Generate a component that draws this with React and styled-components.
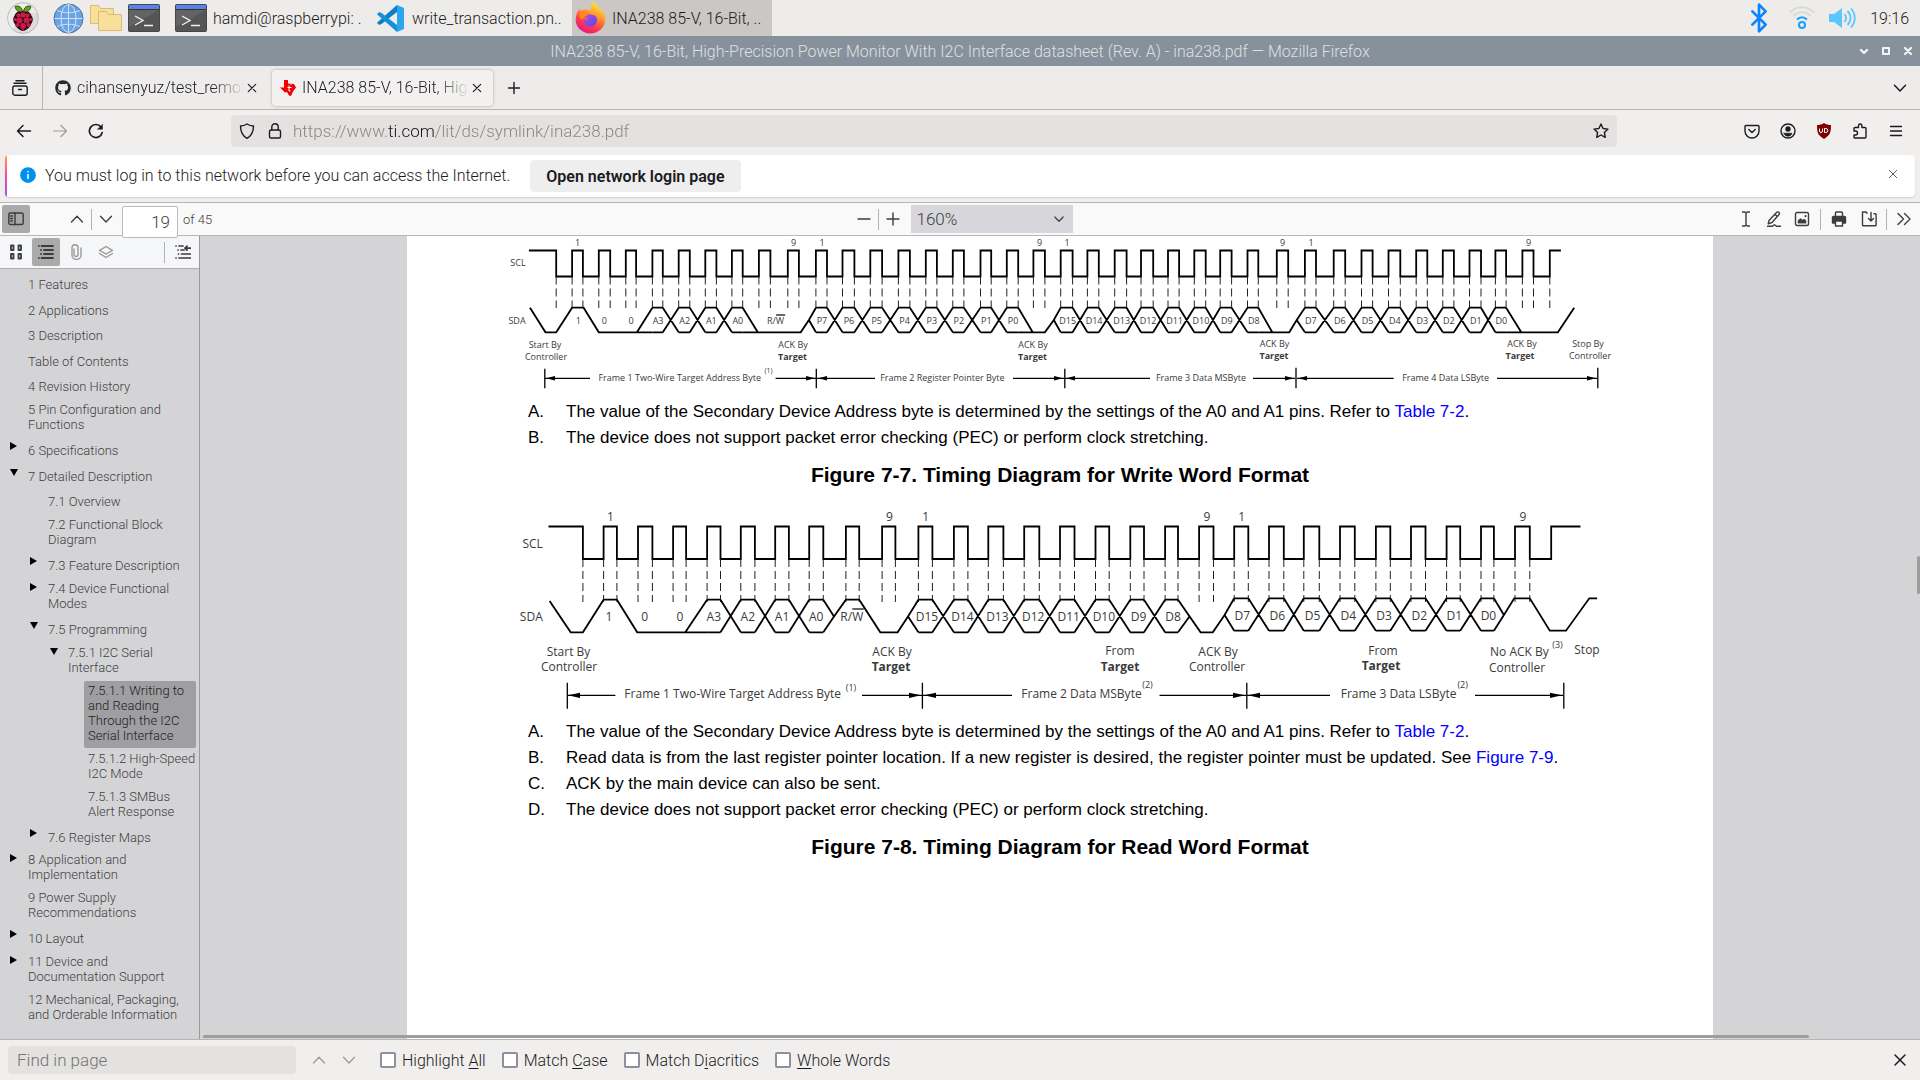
import React from "react";
import styled, { createGlobalStyle, css } from "styled-components";
import { Bluetooth } from "lucide-react";
import { FaGithub } from "react-icons/fa";

const ui = `Roboto, "Noto Sans", sans-serif`;
const doc = `"Liberation Sans", Arial, sans-serif`;

const GlobalStyle = createGlobalStyle`
  *, *::before, *::after { box-sizing: border-box; }
  body { margin: 0; font-family: ${ui}; font-weight: 300; font-size: 16px; color: #1c1b22; background: #edecea; overflow: hidden; }
  button, input, select { font: inherit; color: inherit; margin: 0; padding: 0; border: 0; background: none; border-radius: 0; outline: 0; }
  input, select { font-size: 17px; }
  svg { display: block; flex: none; }
`;

const Screen = styled.div`
  display: flex;
  flex-direction: column;
  height: 100vh;
`;

/* ---------- desktop panel ---------- */
const Panel = styled.header`
  display: flex;
  align-items: center;
  flex: none;
  height: 36px;
  background: #edecea;
`;
const Launchers = styled.nav`
  display: flex;
  align-items: center;
  width: 172px;
  padding-left: 7px;
`;
const Launcher = styled.button`
  display: flex;
  margin-right: ${(p) => p.$gap || 6}px;
`;
const Task = styled.button`
  display: flex;
  align-items: center;
  gap: 6px;
  width: 200px;
  height: 36px;
  padding-left: 3px;
  text-align: left;
  white-space: nowrap;
  background: ${(p) => (p.$active ? "#cbc7c4" : "transparent")};
`;
const Tray = styled.div`
  display: flex;
  align-items: center;
  gap: 14px;
  margin-left: auto;
  padding-right: 11px;
`;
const TitleBar = styled.div`
  display: flex;
  align-items: center;
  flex: none;
  height: 30px;
  padding: 0 6px;
  background: #87919b;
  color: #dde1e4;
`;
const WindowTitle = styled.h1`
  flex: 1;
  margin: 0;
  padding-left: 56px;
  font-size: 16px;
  font-weight: 300;
  text-align: center;
`;
const WindowButtons = styled.div`
  display: flex;
  gap: 10px;
  color: #f4f4f4;
`;

/* ---------- browser chrome ---------- */
const IconButton = styled.button`
  display: flex;
  align-items: center;
  justify-content: center;
  flex: none;
  width: ${(p) => p.$w || 28}px;
  height: 28px;
  border-radius: 2px;
  color: ${(p) => (p.$dim ? "#9b9b99" : "inherit")};
  background: ${(p) => (p.$on ? "#aaaaaa" : "transparent")};
`;
const TabStrip = styled.div`
  display: flex;
  align-items: center;
  flex: none;
  height: 44px;
  border-bottom: 1px solid #b6b7b2;
`;
const FirefoxView = styled.div`
  display: flex;
  align-items: center;
  justify-content: center;
  width: 43px;
  height: 43px;
  padding-right: 2px;
  border-right: 1px solid #b6b7b2;
`;
const Tab = styled.div`
  display: flex;
  align-items: center;
  width: 221px;
  height: 36px;
  margin-left: 4px;
  padding: 0 8px;
  border-radius: 4px;
  ${(p) => p.$active && css`
    background: #f2f1ef;
    box-shadow: 0 0 3px #77777799;
  `}
`;
const TabTitle = styled.span`
  flex: 1;
  margin-left: 6px;
  overflow: hidden;
  white-space: nowrap;
  mask-image: linear-gradient(to left, transparent, #000 32px);
`;
const TabClose = styled.button`
  display: flex;
  justify-content: center;
  width: 16px;
`;
const NavBar = styled.div`
  display: flex;
  align-items: center;
  flex: none;
  height: 42px;
  padding: 0 10px;
  background: #f0efed;
`;
const NavButtons = styled.div`
  display: flex;
  gap: 8px;
  width: 221px;
`;
const Tools = styled.div`
  display: flex;
  gap: 8px;
`;
const UrlBar = styled.label`
  display: flex;
  align-items: center;
  gap: 12px;
  flex: 1;
  height: 32px;
  margin-right: 121px;
  padding: 0 8px;
  border-radius: 4px;
  background: #e3e2e0;
`;
const UrlInput = styled.input`
  flex: 1;
  margin-left: -2px;
  color: transparent;
  background: linear-gradient(90deg, #85857f 94px, #15141a 94px, #15141a 141px, #85857f 141px);
  background-clip: text;
  -webkit-background-clip: text;
`;
const Notification = styled.section`
  display: flex;
  align-items: center;
  flex: none;
  height: 51px;
  padding: 3px 5px 5px;
  background: #f0efed;
  border-bottom: 1px solid #b6b7b2;
`;
const NotificationCard = styled.div`
  display: flex;
  align-items: center;
  flex: 1;
  height: 42px;
  padding: 0 14px;
  border-radius: 4px;
  background: linear-gradient(#ffa436, #ff4aa2 45%, #9059ff) left / 2px 100% no-repeat #fff;
  box-shadow: 0 1px 2px #00000022;
`;
const Message = styled.p`
  display: flex;
  align-items: center;
  gap: 8px;
  margin: 0 20px 2px 0;
`;
const LoginButton = styled.button`
  height: 32px;
  padding: 0 16px;
  border-radius: 4px;
  background: #eeeeee;
  font-weight: 600;
`;
const Push = styled.div`
  margin-left: auto;
`;
const Dismiss = styled(TabClose)`
  margin-bottom: 4px;
  color: #5b5b66;
`;

/* ---------- pdf viewer ---------- */
const ViewerBar = styled.div`
  display: grid;
  grid-template-columns: 1fr auto 1fr;
  flex: none;
  height: 33px;
  border-bottom: 1px solid #b8b8b8;
  background: #f9f9fa;
  color: #3c3c3e;
`;
const BarGroup = styled.div`
  display: flex;
  align-items: center;
  justify-content: ${(p) => p.$align || "flex-start"};
  height: 32px;
  padding-left: 2px;
`;
const Separator = styled.span`
  display: block;
  width: 1px;
  height: 21px;
  margin: 0 ${(p) => p.$m || 0}px;
  background: #b2b2b4;
`;
const PageInput = styled.input`
  position: relative;
  width: 56px;
  height: 32px;
  margin: 6px 5px 0 2px;
  padding: 0 7px;
  border: 1px solid #bbbbbc;
  border-radius: 2px;
  background: #fff;
  text-align: right;
`;
const Small = styled.span`
  font-size: 13px;
`;
const ZoomSelect = styled.span`
  display: flex;
  align-items: center;
  width: 162px;
  height: 28px;
  margin-left: 4px;
  padding-right: 8px;
  background: #d7d7db;
  select { flex: 1; height: 28px; padding-left: 6px; appearance: none; }
`;
const Gap = styled.span`
  width: 33px;
`;
const Viewer = styled.div`
  display: flex;
  flex: 1;
  min-height: 0;
  border-bottom: 1px solid #b6b7b2;
`;
const Sidebar = styled.aside`
  width: 200px;
  flex: none;
  border-right: 1px solid #9a9a9c;
  background: #d4d4d7;
`;
const SidebarBar = styled.div`
  display: flex;
  align-items: center;
  gap: 2px;
  height: 33px;
  padding-left: 2px;
  border-bottom: 1px solid #b0b0b2;
  background: #f5f6f8;
  color: #3c3c3e;
`;
const Outline = styled.div`
  padding: 3px 3px 0 0;
`;
const EntryLink = styled.a`
  display: flex;
  align-items: center;
  flex: 1;
  min-height: 24px;
  padding: 2px 0 ${(p) => (p.$wrap ? 5 : 2)}px 4px;
  border-radius: 2px;
  font-size: 13px;
  line-height: 15px;
  text-decoration: none;
  white-space: pre;
  color: ${(p) => (p.$current ? "#1c1c1e" : "#3e3e40")};
  background: ${(p) => (p.$current ? "#9f9fa1" : "transparent")};
`;
const Entry = styled.div`
  display: flex;
  align-items: flex-start;
  margin-bottom: 1px;
  padding-left: ${(p) => p.$level * 20}px;
  &:nth-child(odd) ${EntryLink} { min-height: 25px; }
`;
const Toggle = styled.button`
  display: flex;
  justify-content: center;
  width: 24px;
  padding: 4px 0 0 3px;
`;
const Canvas = styled.main`
  position: relative;
  flex: 1;
  display: flex;
  justify-content: center;
  background: #d4d4d7;
  overflow: hidden;
`;
const ScrollX = styled.div`
  position: absolute;
  left: 3px;
  right: 111px;
  bottom: 1px;
  height: 3px;
  border-radius: 2px;
  background: #9c9e9d;
`;
const ScrollY = styled.div`
  position: absolute;
  right: 0;
  top: 320px;
  width: 3px;
  height: 38px;
  border-radius: 2px;
  background: #9c9e9d;
`;
const Sheet = styled.article`
  width: 1306px;
  flex: none;
  padding: 0 93px;
  background: #fff;
  color: #000;
  font-family: ${doc};
  font-weight: 400;
  font-size: 17px;
  line-height: 26px;
`;
const Notes = styled.ol`
  margin: 0;
  padding: 0 0 0 28px;
  list-style: none;
`;
const Note = styled.li`
  display: flex;
  white-space: nowrap;
  a { color: #0000ff; text-decoration: none; }
`;
const Letter = styled.span`
  width: 38px;
`;
const Figure = styled.figure`
  margin: 0;
`;
const Caption = styled.figcaption`
  margin: 11px 0 24px;
  font-size: 21px;
  font-weight: 700;
  line-height: 26px;
  text-align: center;
`;
const Drawing = styled.svg`
  overflow: visible;
  font-family: "Open Sans", "Noto Sans", sans-serif;
  font-size: ${(p) => p.$size}px;
  fill: none;
  stroke: #000;
  text { fill: #3a3a3a; stroke: none; text-anchor: middle; }
`;

/* ---------- find bar ---------- */
const FindBar = styled.form`
  display: flex;
  align-items: center;
  flex: none;
  height: 40px;
  padding: 0 6px 0 8px;
  background: #f0efed;
`;
const FindInput = styled.input`
  width: 288px;
  height: 28px;
  margin-right: 8px;
  padding: 0 9px;
  border-radius: 4px;
  background: #e3e2e0;
  &::placeholder { color: #73736f; opacity: 1; }
`;
const Check = styled.label`
  display: flex;
  align-items: center;
  gap: 6px;
  margin-left: 16px;
  u { text-underline-offset: 2px; }
`;
const CheckBox = styled.input`
  appearance: none;
  width: 16px;
  height: 16px;
  border: 2px solid #8f8f9d;
  border-radius: 2px;
  background: #fff;
`;

/* ---------- icons ---------- */
const Ico = ({ s = 16, w = 1.4, children, box = 16 }) => (
  <svg width={s} height={s} viewBox={`0 0 ${box} ${box}`} fill="none" stroke="currentColor" strokeWidth={w} strokeLinecap="round" strokeLinejoin="round" aria-hidden="true">
    {children}
  </svg>
);
const Chevron = ({ up, s = 16, w = 1.3 }) => (
  <Ico s={s} w={w}><path d={up ? "M2.5 11 8 5.3 13.5 11" : "M2.5 5.3 8 11 13.5 5.3"} /></Ico>
);
const Cross = ({ s = 16, w = 1.2 }) => (
  <Ico s={s} w={w}><path d="M4.300 4.300l7.400 7.400M11.700 4.300l-7.400 7.400" /></Ico>
);

const Raspberry = () => (
  <svg width="32" height="32" viewBox="0 0 32 32" aria-hidden="true">
    <circle cx="16" cy="16" r="15.4" fill="#dcdcdc" stroke="#b9b9b9" />
    <path d="M1.5 13A15 15 0 0 1 30 11C20 9 10 18 6 27A15 15 0 0 1 1.5 13z" fill="#ececec" />
    <path d="M16 9c4-1 8 2 8.500 5 2 2 1.500 6-.5 8-1 4-5 6.500-8 7-3-.5-7-3-8-7-2-2-2.500-6-.5-8C8 11 12 8 16 9z" fill="#2a0610" />
    <g fill="#c51a4a">
      <circle cx="16" cy="13" r="2.700" /><circle cx="11.500" cy="13.500" r="2.200" /><circle cx="20.500" cy="13.500" r="2.200" />
      <circle cx="12.500" cy="18.600" r="3" /><circle cx="19.500" cy="18.600" r="3" /><circle cx="16" cy="24" r="2.900" />
      <circle cx="8.300" cy="17.500" r="1.800" /><circle cx="23.700" cy="17.500" r="1.800" />
      <circle cx="10.500" cy="23" r="2" /><circle cx="21.500" cy="23" r="2" /><circle cx="16" cy="27.600" r="1.100" />
    </g>
    <path d="M15.500 9.800C11 10.500 8.500 8 8.200 4.300c3.500-.8 6.800.5 7.300 5.500zM16.500 9.800c4.500.7 7-1.800 7.300-5.500-3.500-.8-6.800.5-7.300 5.500z" fill="#5fa321" stroke="#1d3a08" strokeWidth=".8" />
  </svg>
);
const Globe = () => (
  <svg width="31" height="31" viewBox="0 0 31 31" fill="none" aria-hidden="true">
    <circle cx="15.500" cy="15.500" r="14.500" fill="#6ba4e4" stroke="#4a6f9c" />
    <g stroke="#cfe2f7" strokeWidth="1">
      <ellipse cx="15.500" cy="15.500" rx="7.500" ry="14" /><path d="M15.500 1.500v28M1.500 15.500h28M4 7.500c7 3 16 3 23 0M4 23.500c7-3 16-3 23 0" />
    </g>
  </svg>
);
const Folders = () => (
  <svg width="32" height="28" viewBox="0 0 32 28" fill="#f8e09a" stroke="#d9bb74" aria-hidden="true">
    <path d="M.5 1.500h8l2 3h13v15H.5z" /><path d="M8.500 7.500h8l2 3h13v16h-23z" />
  </svg>
);
const Terminal = () => (
  <svg width="32" height="28" viewBox="0 0 32 28" fill="none" aria-hidden="true">
    <rect x=".5" y=".5" width="31" height="27" rx="1" fill="#555" stroke="#474747" />
    <path d="M1 6h30L1 23z" fill="#636363" /><path d="M1 1h30v4H1z" fill="#5b82e8" /><path d="M1 5.500h30" stroke="#333" />
    <path d="M7 12l8 4.500-8 4.500M16 21.500h9" stroke="#f2f2f2" strokeWidth="1.400" />
  </svg>
);
const VsCode = () => (
  <svg width="31" height="29" viewBox="0 0 31 29" aria-hidden="true">
    <path d="M22 1l7 3v21l-7 3z" fill="#2aa5f0" />
    <path d="M22 1L4.500 16.500 2 18.800 4 21 6.500 20 22 8z" fill="#0d7fc6" />
    <path d="M22 28L4.500 12.500 2 10.200 4 8l2.500 1L22 21z" fill="#1590d8" />
  </svg>
);
const Firefox = () => (
  <svg width="31" height="32" viewBox="0 0 31 32" aria-hidden="true">
    <defs>
      <linearGradient id="fx" x1=".8" y1="0" x2=".3" y2="1"><stop offset="0" stopColor="#fff044" /><stop offset=".35" stopColor="#ffa32c" /><stop offset=".7" stopColor="#ff3c4a" /><stop offset="1" stopColor="#e31587" /></linearGradient>
      <linearGradient id="fg" x1="0" y1="0" x2="1" y2="1"><stop offset="0" stopColor="#b04df0" /><stop offset="1" stopColor="#5b46d6" /></linearGradient>
    </defs>
    <path d="M18.500 0c4 2.500 5 6 5.500 8 1-.3 1-1.500.8-2.500C29 9 30.500 14 30.300 18 29.800 26 23 31.500 15.500 31.500S1 26 .7 18.500C.5 13 2.500 9 5 6.500l.5 3C9 6 14 8 15.500 9c-.5-3.500.5-7 3-9z" fill="url(#fx)" />
    <path d="M10 14c2-2.500 5-2 7-1 3-.5 5 2 5 5 0 4-3 6.500-6.500 6.500S8.500 22 8.500 18c2 0 4 0 5-1.500-2 0-3-1-3.500-2.500z" fill="url(#fg)" />
    <path d="M5 11c3-2 7-2 9 1l-4 2.500C7.500 16 8 18 8 18c-3-1-4-4-3-7z" fill="#ff8a16" />
  </svg>
);
const Wifi = () => (
  <svg width="26" height="24" viewBox="0 0 26 24" fill="none" strokeWidth="2" aria-hidden="true">
    <path d="M1 6.500C7.500-.5 18.500-.5 25 6.500M4.500 10c4.500-5 12.500-5 17 0" stroke="#d9d9d9" />
    <path d="M8 13.500c3-3 7-3 10 0M13 22a3 3 0 1 0 0-6 3 3 0 0 0 0 6z" stroke="#1a9fff" />
  </svg>
);
const Speaker = () => (
  <svg width="27" height="22" viewBox="0 0 27 22" fill="none" stroke="#5cc6ff" strokeWidth="1.800" aria-hidden="true">
    <path d="M0 7h5l8-6v20l-8-6H0z" fill="#5cc6ff" stroke="none" /><path d="M15.500 7c2 2.500 2 5.500 0 8M18.500 4c4 4 4 10 0 14M22 1.500c5 5.500 5 13.500 0 19" />
  </svg>
);
const TexasMark = () => (
  <svg width="16" height="16" viewBox="0 0 16 16" aria-hidden="true">
    <path d="M4 0h4v3.500l6 .5 2 3.500-3 4-2 4.500-2-.5-2-3.500-2 .5L0 7.500h4z" fill="#f00000" />
    <path d="M9 5.500v5.500h1.500M7.500 7.500h4M11 4v.8" stroke="#fff" fill="none" />
  </svg>
);
const Ublock = () => (
  <svg width="16" height="16" viewBox="0 0 16 16" aria-hidden="true">
    <path d="M8 0c2 1.500 4.500 2 7 2 0 7-.5 10-7 14C1.500 12 1 9 1 2c2.500 0 5-.5 7-2z" fill="#800000" />
    <path d="M3.500 5.500V8a1.500 1.500 0 0 0 3 0V5.500M8.500 5.500v4h1.300a2 2 0 0 0 0-4z" fill="none" stroke="#fff" />
  </svg>
);

/* ---------- outline data ---------- */
const outline = [
  ["1 Features"], ["2 Applications"], ["3 Description"], ["Table of Contents"], ["4 Revision History"],
  ["5 Pin Configuration and\nFunctions"],
  ["6 Specifications", 0, "closed"],
  ["7 Detailed Description", 0, "open"],
  ["7.1 Overview", 1], ["7.2 Functional Block\nDiagram", 1],
  ["7.3 Feature Description", 1, "closed"],
  ["7.4 Device Functional\nModes", 1, "closed"],
  ["7.5 Programming", 1, "open"],
  ["7.5.1 I2C Serial\nInterface", 2, "open"],
  ["7.5.1.1 Writing to\nand Reading\nThrough the I2C\nSerial Interface", 3, null, true],
  ["7.5.1.2 High-Speed\nI2C Mode", 3], ["7.5.1.3 SMBus\nAlert Response", 3],
  ["7.6 Register Maps", 1, "closed"],
  ["8 Application and\nImplementation", 0, "closed"],
  ["9 Power Supply\nRecommendations"],
  ["10 Layout", 0, "closed"],
  ["11 Device and\nDocumentation Support", 0, "closed"],
  ["12 Mechanical, Packaging,\nand Orderable Information"],
];

/* ---------- timing diagrams ---------- */
const clockPath = (start, fall, pulses, hi, lo, rise, end) =>
  `M${start} ${hi}H${fall}V${lo}` + pulses.map(([a, b]) => `H${a}V${hi}H${b}V${lo}`).join("") + `H${rise}V${hi}H${end}`;

const busPath = (cells, hi, lo) =>
  cells.map(([a, b], i) => {
    const next = cells[i + 1];
    return `M${a} ${hi}H${b}M${a} ${lo}H${b}` + (next ? `M${b} ${hi}L${next[0]} ${lo}M${b} ${lo}L${next[0]} ${hi}` : "");
  }).join("");

const Guides = ({ xs, y1, y2 }) => (
  <path d={xs.map((x) => `M${x} ${y1}V${y2}`).join("")} strokeWidth="1" strokeDasharray="8 4" stroke="#222" />
);

const Span = ({ from, to, y, text, len, size, children }) => {
  const h = size === 9 ? 2.2 : 2.6;
  return (
    <g>
      <path d={`M${from} ${y}H${text[0]}M${text[1]} ${y}H${to}`} strokeWidth="1.300" />
      <path d={`M${from + 1} ${y}l${len} ${-h}v${2 * h}zM${to - 1} ${y}l${-len} ${-h}v${2 * h}z`} fill="#000" stroke="none" />
      {children}
    </g>
  );
};

const RW = ({ x, y, w, top }) => (
  <g><text x={x} y={y}>R/W</text><path d={`M${x + w[0]} ${top}h${w[1]}`} strokeWidth="1.200" /></g>
);

const wPulses = [
  [572.1, 582.9], [598.8, 610.2], [625.8, 636.1], [652.4, 662.8], [678.7, 689.8], [705.3, 716.4], [731.9, 742.7], [758.9, 770.4], [787.8, 798.9],
  [815.9, 827], [842.5, 854.4], [870.3, 882.1], [898.4, 909.9], [925.8, 936.9], [952.8, 963.9], [980.5, 991.2], [1006.8, 1018.2], [1033.4, 1044.9],
  [1060.7, 1072.6], [1087.4, 1098.8], [1114.7, 1126.6], [1141, 1153.2], [1168, 1179.1], [1194.3, 1205.7], [1220.2, 1231.6], [1247.5, 1258.3], [1276.8, 1288.2],
  [1304.9, 1316], [1333.7, 1345.2], [1361.5, 1372.6], [1388.5, 1400.3], [1416.2, 1427.3], [1442.8, 1453.9], [1469.5, 1481], [1495.4, 1506.1], [1522.4, 1533.5],
];
const rPulses = [
  [603.6, 616.9], [638, 652.4], [673.1, 686.1], [707.1, 720.5], [740.8, 754.9], [775.2, 788.9], [809.2, 823.3], [845.9, 859.2], [882.1, 895.4],
  [918.4, 932.4], [953.9, 967.9], [988.3, 1003.4], [1024.2, 1039.3], [1060, 1074.5], [1095.5, 1109.2], [1130.3, 1144], [1165.1, 1178], [1199.1, 1213.5],
  [1234.2, 1248.3], [1269, 1283.8], [1303.8, 1319.3], [1340, 1354.8], [1375.9, 1390.3], [1411, 1425.5], [1446.6, 1460.2], [1481, 1493.9], [1515, 1529.8],
];

const CellLabels = ({ cells, names, y, dx = 0 }) =>
  names.map((n, i) => <text key={n} x={(cells[i][0] + cells[i][1]) / 2 + dx} y={y}>{n}</text>);

function WriteDiagram() {
  const hi = 307.700, lo = 332.300, mid = 320;
  const a = wPulses.slice(3, 7), p = wPulses.slice(9, 17), d = wPulses.slice(18, 26), e = wPulses.slice(27, 35);
  return (
    <Drawing $size={9} width="1120" height="163" viewBox="500 236 1120 163" role="img" aria-label="Write word timing">
      <path d={clockPath(528.9, 556.2, wPulses, 250.5, 276.5, 1549.8, 1560.9)} strokeWidth="1.800" />
      <Guides xs={[556.2, ...wPulses.flat(), 1549.8]} y1={276.5} y2={308} />
      <g strokeWidth="1.800">
        <path d={`M530 ${hi}L545.5 ${lo}H556.2L572.1 ${hi}H583.6L598.8 ${lo}H652.4M636.9 ${lo}L652.4 ${hi}`} />
        <path d={busPath(a, hi, lo)} />
        <path d={`M742.7 ${hi}L757.8 ${lo}M742.7 ${lo}H800.7L808.9 ${mid}L815.9 ${hi}M808.9 ${mid}L815.9 ${lo}`} />
        <path d={busPath(p, hi, lo)} />
        <path d={`M1018.2 ${hi}L1032.7 ${lo}M1018.2 ${lo}H1044.9L1053.8 ${mid}L1060.7 ${hi}M1053.8 ${mid}L1060.7 ${lo}`} />
        <path d={busPath(d, hi, lo)} />
        <path d={`M1258.3 ${hi}L1272.3 ${lo}M1258.3 ${lo}H1289.3L1296.7 ${mid}L1304.9 ${hi}M1296.7 ${mid}L1304.9 ${lo}`} />
        <path d={busPath(e, hi, lo)} />
        <path d={`M1506.1 ${hi}L1521.3 ${lo}M1506.1 ${lo}H1557.9L1574.2 ${hi}`} />
      </g>
      <g>
        {[[577.5, "1"], [793.500, "9"], [822, "1"], [1039.500, "9"], [1067, "1"], [1282.500, "9"], [1311, "1"], [1528.500, "9"]].map(([x, t]) => <text key={x} x={x} y="246">{t}</text>)}
        <text x="518" y="266">SCL</text><text x="517" y="323.500">SDA</text>
        <text x="578.400" y="323.500">1</text><text x="604.300" y="323.500">0</text><text x="631" y="323.500">0</text>
        <CellLabels cells={a} names={["A3", "A2", "A1", "A0"]} y={323.500} dx={0.500} />
        <RW x={775.600} y={323.500} w={[0.500, 9]} top={315} />
        <CellLabels cells={p} names={["P7", "P6", "P5", "P4", "P3", "P2", "P1", "P0"]} y={323.500} dx={0.500} />
        <CellLabels cells={d} names={["D15", "D14", "D13", "D12", "D11", "D10", "D9", "D8"]} y={323.500} dx={1} />
        <CellLabels cells={e} names={["D7", "D6", "D5", "D4", "D3", "D2", "D1", "D0"]} y={323.500} dx={0.500} />
        <text x="545" y="348">Start By</text><text x="546" y="360">Controller</text>
        {[[793, 348, 792.500, 360], [1033, 348, 1032.500, 360], [1274.500, 347, 1274, 359], [1522, 347, 1520, 359]].map(([x, y, x2, y2]) => (
          <g key={x}><text x={x} y={y}>ACK By</text><text x={x2} y={y2} fontWeight="700">Target</text></g>
        ))}
        <text x="1588" y="347">Stop By</text><text x="1590" y="359">Controller</text>
      </g>
      <path d="M544.800 368.700V388.300M816.300 368.700V388.300M1064.800 368.700V388.300M1296 367.700V388.300M1597.800 367.700V388.300" strokeWidth="1.300" />
      <Span from={545} to={816} y={378.300} text={[590, 775.600]} len={9} size={9}><text x="679.700" y="381">Frame 1 Two-Wire Target Address Byte</text><text x="768.500" y="372.500" fontSize="7">(1)</text></Span>
      <Span from={817} to={1064} y={378.300} text={[875, 1013]} len={9} size={9}><text x="942.400" y="381">Frame 2 Register Pointer Byte</text></Span>
      <Span from={1065} to={1295} y={378.300} text={[1150, 1253]} len={9} size={9}><text x="1201" y="381">Frame 3 Data MSByte</text></Span>
      <Span from={1297} to={1597} y={378.300} text={[1393.700, 1497]} len={9} size={9}><text x="1445.600" y="381">Frame 4 Data LSByte</text></Span>
    </Drawing>
  );
}

function ReadDiagram() {
  const hi = 599.700, lo = 632.300, mid = 616.500, hi2 = 598.300, lo2 = 630.700, mid2 = 615;
  const a = rPulses.slice(3, 7), d = rPulses.slice(9, 17), e = rPulses.slice(18, 26);
  return (
    <Drawing $size={12} width="1120" height="207" viewBox="500 512 1120 207" role="img" aria-label="Read word timing">
      <path d={clockPath(548.500, 582.900, rPulses, 526.500, 559, 1551.200, 1580.500)} strokeWidth="1.800" />
      <Guides xs={[582.900, ...rPulses.flat()]} y1={559} y2={602} />
      <g strokeWidth="1.800">
        <path d={`M549.600 601L570.700 ${lo}H582.900L603.600 ${hi}H616.900L637.200 ${lo}H707.100M685.300 ${lo}L707.100 ${hi}`} />
        <path d={busPath(a, hi, lo)} />
        <path d={`M823.300 ${hi}L834 ${mid}M823.300 ${lo}L834 ${mid}L845.900 ${hi}H859.200L880.300 ${lo}H897.600L908 ${mid}L918.400 ${hi}M908 ${mid}L918.400 ${lo}`} />
        <path d={busPath(d, hi, lo)} />
        <path d={`M1178 ${lo}L1189.500 ${mid}M1178 ${hi}L1200.600 ${lo}H1212.800L1224.600 ${mid2}L1234.200 ${hi2}M1224.600 ${mid2}L1234.200 ${lo2}`} />
        <path d={busPath(e, hi2, lo2)} />
        <path d={`M1493.900 ${hi2}L1503.900 ${mid2}M1493.900 ${lo2}L1503.900 ${mid2}L1514.200 ${hi2}H1529.800L1549.800 ${lo2}H1566L1589.300 ${hi2}H1597.100`} />
      </g>
      <g>
        {[[610.500, "1"], [889.500, "9"], [925.800, "1"], [1207, "9"], [1241.600, "1"], [1523, "9"]].map(([x, t]) => <text key={x} x={x} y="521">{t}</text>)}
        <text x="532.700" y="548">SCL</text><text x="531.300" y="621">SDA</text>
        <text x="609" y="620.500">1</text><text x="644.600" y="620.500">0</text><text x="680" y="620.500">0</text>
        <CellLabels cells={a} names={["A3", "A2", "A1", "A0"]} y={620.500} />
        <RW x={851.800} y={620.500} w={[0.500, 11.500]} top={609} />
        <CellLabels cells={d} names={["D15", "D14", "D13", "D12", "D11", "D10", "D9", "D8"]} y={620.500} dx={1.500} />
        <CellLabels cells={e} names={["D7", "D6", "D5", "D4", "D3", "D2", "D1", "D0"]} y={620} dx={1} />
        <text x="568.500" y="656">Start By</text><text x="569" y="671">Controller</text>
        <text x="892" y="656">ACK By</text><text x="891" y="671" fontWeight="700">Target</text>
        <text x="1120" y="655">From</text><text x="1120" y="671" fontWeight="700">Target</text>
        <text x="1218" y="656">ACK By</text><text x="1217" y="671">Controller</text>
        <text x="1383" y="655">From</text><text x="1381" y="670" fontWeight="700">Target</text>
        <text x="1519.400" y="656">No ACK By</text><text x="1557.500" y="648" fontSize="9">(3)</text><text x="1517" y="672">Controller</text>
        <text x="1587" y="654">Stop</text>
      </g>
      <path d="M567.300 682.700V708.700M922.400 682.700V708.700M1246.800 682.700V708.700M1563.800 682.700V708.700" strokeWidth="1.300" />
      <Span from={567} to={922} y={695.300} text={[615.400, 862]} len={12} size={12}><text x="732.700" y="697.500">Frame 1 Two-Wire Target Address Byte</text><text x="851" y="690.500" fontSize="9">(1)</text></Span>
      <Span from={923} to={1246} y={695.300} text={[1012, 1159.500]} len={12} size={12}><text x="1081.500" y="697.500">Frame 2 Data MSByte</text><text x="1147.500" y="687.500" fontSize="9">(2)</text></Span>
      <Span from={1247} to={1563} y={695.300} text={[1330, 1475]} len={12} size={12}><text x="1398.600" y="697.500">Frame 3 Data LSByte</text><text x="1462.700" y="687.500" fontSize="9">(2)</text></Span>
    </Drawing>
  );
}

const stop = (e) => e.preventDefault();

export default function App() {
  return (
    <Screen>
      <GlobalStyle />
      <Panel>
        <Launchers>
          <Launcher $gap={14} aria-label="Menu"><Raspberry /></Launcher>
          <Launcher aria-label="Web browser"><Globe /></Launcher>
          <Launcher aria-label="Files"><Folders /></Launcher>
          <Launcher aria-label="Terminal"><Terminal /></Launcher>
        </Launchers>
        <Task><Terminal />hamdi@raspberrypi: .</Task>
        <Task><VsCode />write_transaction.pn..</Task>
        <Task $active><Firefox />INA238 85-V, 16-Bit, ..</Task>
        <Tray>
          <Bluetooth size={32} color="#0a84ff" strokeWidth={2} />
          <Wifi />
          <Speaker />
          <span>19:16</span>
        </Tray>
      </Panel>
      <TitleBar>
        <WindowTitle>INA238 85-V, 16-Bit, High-Precision Power Monitor With I2C Interface datasheet (Rev. A) - ina238.pdf — Mozilla Firefox</WindowTitle>
        <WindowButtons>
          <button aria-label="Minimize"><Ico s={12} box={12} w={2.4}><path d="M3 5l3 3 3-3" /></Ico></button>
          <button aria-label="Maximize"><Ico s={12} box={12} w={2}><path d="M3 3h6v6H3z" /></Ico></button>
          <button aria-label="Close window"><Ico s={12} box={12} w={2.2}><path d="M3 3l6 6M9 3l-6 6" /></Ico></button>
        </WindowButtons>
      </TitleBar>

      <TabStrip>
        <FirefoxView>
          <IconButton aria-label="Firefox View"><Ico><rect x=".8" y="6" width="14.400" height="9.200" rx="2" /><path d="M2 3.300h12M4 .8h8M6.500 9.500h3" /></Ico></IconButton>
        </FirefoxView>
        <Tab>
          <FaGithub size={16} color="#24292f" />
          <TabTitle>cihansenyuz/test_remote</TabTitle>
          <TabClose aria-label="Close tab"><Cross /></TabClose>
        </Tab>
        <Tab $active>
          <TexasMark />
          <TabTitle>INA238 85-V, 16-Bit, High-Precision</TabTitle>
          <TabClose aria-label="Close tab"><Cross /></TabClose>
        </Tab>
        <IconButton $w={42} aria-label="New tab"><Ico><path d="M8 2.500v11M2.500 8h11" /></Ico></IconButton>
        <Push><IconButton $w={40} aria-label="List all tabs"><Chevron w={1.5} /></IconButton></Push>
      </TabStrip>

      <NavBar>
        <NavButtons>
          <IconButton aria-label="Back"><Ico w={1.5}><path d="M1.500 8h13M7 2.500L1.500 8 7 13.500" /></Ico></IconButton>
          <IconButton $dim aria-label="Forward"><Ico w={1.2}><path d="M1.500 8h13M9 2.500L14.500 8 9 13.500" /></Ico></IconButton>
          <IconButton aria-label="Reload"><Ico w={1.7}><path d="M14.200 9.500A6.500 6.500 0 1 1 13 4" /><path d="M14.500 1.500v4.800H9.700z" fill="currentColor" strokeWidth=".5" /></Ico></IconButton>
        </NavButtons>
        <UrlBar>
          <Ico><path d="M8 1C6.500 2 3.500 3 1.500 3c0 6 1.500 9.500 6.500 12.300C13 12.500 14.500 9 14.500 3 12.500 3 9.500 2 8 1z" /></Ico>
          <Ico><rect x="2.500" y="7" width="11" height="8" rx="1.500" /><path d="M4.800 7V4a3.200 3.200 0 0 1 6.400 0v3" /></Ico>
          <UrlInput aria-label="Address" defaultValue="https://www.ti.com/lit/ds/symlink/ina238.pdf" />
          <Ico><path d="M8 1l2.100 4.500 4.900.6-3.600 3.400.9 4.900L8 12l-4.300 2.400.9-4.900L1 6.100l4.900-.6z" /></Ico>
        </UrlBar>
        <Tools>
          <IconButton aria-label="Pocket"><Ico><path d="M2 2.500h12a1 1 0 0 1 1 1V8a7 7 0 0 1-14 0V3.500a1 1 0 0 1 1-1zM4.800 6.500L8 9.500l3.200-3" /></Ico></IconButton>
          <IconButton aria-label="Account"><Ico><circle cx="8" cy="8" r="7" /><circle cx="8" cy="6" r="2" fill="currentColor" /><path d="M4 10.200h8c-.5 2-2 3-4 3s-3.500-1-4-3z" fill="currentColor" strokeWidth=".6" /></Ico></IconButton>
          <IconButton aria-label="uBlock Origin"><Ublock /></IconButton>
          <IconButton aria-label="Extensions"><Ico><path d="M2 8V5.500a1 1 0 0 1 1-1h3.500V2.700a1.700 1.700 0 0 1 3.400 0v1.800H13a1 1 0 0 1 1 1V14a1 1 0 0 1-1 1H3a1 1 0 0 1-1-1v-2h1.500a1.800 1.800 0 0 0 0-4H2" /></Ico></IconButton>
          <IconButton aria-label="Application menu"><Ico><path d="M2.500 3.500h11M2.500 8h11M2.500 12.500h11" /></Ico></IconButton>
        </Tools>
      </NavBar>

      <Notification>
        <NotificationCard>
          <Message>
            <Ico s={18}><circle cx="8" cy="8" r="7" fill="#0090ed" stroke="none" /><path d="M8 7.500v3.500M8 4.900v.2" stroke="#fff" /></Ico>
            You must log in to this network before you can access the Internet.
          </Message>
          <LoginButton>Open network login page</LoginButton>
          <Push><Dismiss aria-label="Dismiss"><Cross w={1} /></Dismiss></Push>
        </NotificationCard>
      </Notification>

      <ViewerBar>
        <BarGroup>
          <IconButton $on aria-label="Toggle sidebar"><Ico><rect x=".8" y="2" width="14.400" height="11.500" rx="1.500" /><path d="M7 2v11.500M2.500 5h2M2.500 7.500h2M2.500 10h2" /></Ico></IconButton>
          <Gap />
          <IconButton aria-label="Previous page"><Chevron up /></IconButton>
          <Separator />
          <IconButton aria-label="Next page"><Chevron /></IconButton>
          <PageInput aria-label="Page" defaultValue="19" />
          <Small>of 45</Small>
        </BarGroup>
        <BarGroup>
          <IconButton aria-label="Zoom out"><Ico><path d="M2 8h12" /></Ico></IconButton>
          <Separator />
          <IconButton aria-label="Zoom in"><Ico><path d="M2 8h12M8 2v12" /></Ico></IconButton>
          <ZoomSelect>
            <select aria-label="Zoom" defaultValue="160%"><option>160%</option></select>
            <Chevron s={12} w={1.6} />
          </ZoomSelect>
        </BarGroup>
        <BarGroup $align="flex-end">
          <IconButton aria-label="Text"><Ico><path d="M4.500 1h2.300L8 2l1.200-1h2.300M8 2v12M4.500 15h2.300L8 14l1.200 1h2.300" /></Ico></IconButton>
          <IconButton aria-label="Draw"><Ico><path d="M3 9.500L10.500 1.500a1.500 1.500 0 0 1 2.500 2L6 11.500l-3.800 1.300zM9 3.500l2.500 2M1.500 15.200h5l2-1.500 2 1.500h4" /></Ico></IconButton>
          <IconButton aria-label="Image"><Ico><rect x="1.500" y="1.500" width="13" height="13" rx="1.500" /><path d="M4 12V9.500l2.500-2 2 1.500 1.500-1 2 1.500V12z" fill="currentColor" strokeWidth=".5" /><path d="M11.500 5v.3" strokeWidth="2" /></Ico></IconButton>
          <Separator $m={4} />
          <IconButton aria-label="Print"><Ico><path d="M4.500 5V2a1 1 0 0 1 1-1h5a1 1 0 0 1 1 1v3" /><path d="M1.500 6.500a1 1 0 0 1 1-1h11a1 1 0 0 1 1 1V12h-3V9.500h-7V12h-3z" fill="currentColor" /><path d="M4.500 10h7v5h-7z" fill="#fff" /></Ico></IconButton>
          <IconButton $w={32} aria-label="Save"><Ico><path d="M6 2.200L5 1H1.500v13a.8.8 0 0 0 .8.800h12a.8.8 0 0 0 .8-.8V3.500a.8.8 0 0 0-.8-.8H13M10 1.500v8M7.500 7.500L10 10l2.500-2.500" /></Ico></IconButton>
          <Separator $m={1} />
          <IconButton $w={32} aria-label="Tools"><Ico><path d="M2 2.500L7.500 8 2 13.500M8.500 2.500L14 8l-5.500 5.500" /></Ico></IconButton>
        </BarGroup>
      </ViewerBar>

      <Viewer>
        <Sidebar>
          <SidebarBar>
            <IconButton aria-label="Thumbnails"><Ico w={1.8}><path d="M3 1.500h2.500V6H3zM10.500 1.500H13V6h-2.500zM3 10h2.500v4.500H3zM10.500 10H13v4.500h-2.500z" /></Ico></IconButton>
            <IconButton $on aria-label="Outline"><Ico w={1.8}><path d="M3.500 2H15M6 6h9M6 10h9M3.500 14H15M.8 2h.1M3 6h.1M3 10h.1M.8 14h.1" /></Ico></IconButton>
            <IconButton $dim aria-label="Attachments"><Ico><path d="M6 5v5.500a2 2 0 0 0 4 0V4a3 3 0 0 0-6-.5M4 3.500v7.500a4.500 4.500 0 0 0 9 0V4" /></Ico></IconButton>
            <IconButton $dim aria-label="Layers"><Ico><path d="M8 2.500l6.500 3.800L8 10 1.500 6.300zM1.500 9.500L8 13.500l6.500-4" /></Ico></IconButton>
            <Push><Separator /></Push>
            <IconButton $w={32} aria-label="Current outline item"><Ico w={1.7}><path d="M1 2h.1M4 2h4M3 6h.1M6 6h3M3.500 10h.1M6.500 10h9M1 14h.1M4 14h11.500M10 4.200h5.500M12 2.200l-2 2 2 2" /></Ico></IconButton>
          </SidebarBar>
          <Outline>
            {outline.map(([text, level = 0, state, current]) => (
              <Entry key={text} $level={level}>
                <Toggle aria-label={state ? `${state} section` : "section"} tabIndex={state ? 0 : -1}>
                  {state && (
                    <svg width="8" height="8" viewBox="0 0 8 8"><path d={state === "open" ? "M0 1h8L4 8z" : "M0 0l7 4-7 4z"} /></svg>
                  )}
                </Toggle>
                <EntryLink href="#" onClick={stop} $wrap={text.includes("\n")} $current={current}>{text}</EntryLink>
              </Entry>
            ))}
          </Outline>
        </Sidebar>
        <Canvas>
          <Sheet>
            <Figure>
              <WriteDiagram />
              <Notes>
                <Note><Letter>A.</Letter><span>The value of the Secondary Device Address byte is determined by the settings of the A0 and A1 pins. Refer to <a href="#t72">Table 7-2</a>.</span></Note>
                <Note><Letter>B.</Letter><span>The device does not support packet error checking (PEC) or perform clock stretching.</span></Note>
              </Notes>
              <Caption>Figure 7-7. Timing Diagram for Write Word Format</Caption>
            </Figure>
            <Figure>
              <ReadDiagram />
              <Notes>
                <Note><Letter>A.</Letter><span>The value of the Secondary Device Address byte is determined by the settings of the A0 and A1 pins. Refer to <a href="#t72">Table 7-2</a>.</span></Note>
                <Note><Letter>B.</Letter><span>Read data is from the last register pointer location. If a new register is desired, the register pointer must be updated. See <a href="#f79">Figure 7-9</a>.</span></Note>
                <Note><Letter>C.</Letter><span>ACK by the main device can also be sent.</span></Note>
                <Note><Letter>D.</Letter><span>The device does not support packet error checking (PEC) or perform clock stretching.</span></Note>
              </Notes>
              <Caption>Figure 7-8. Timing Diagram for Read Word Format</Caption>
            </Figure>
          </Sheet>
          <ScrollX />
          <ScrollY />
        </Canvas>
      </Viewer>

      <FindBar onSubmit={stop}>
        <FindInput aria-label="Find in page" placeholder="Find in page" />
        <IconButton type="button" $dim $w={30} aria-label="Find previous"><Chevron up /></IconButton>
        <IconButton type="button" $dim $w={30} aria-label="Find next"><Chevron /></IconButton>
        <Check><CheckBox type="checkbox" /><span>Highlight <u>A</u>ll</span></Check>
        <Check><CheckBox type="checkbox" /><span>Match <u>C</u>ase</span></Check>
        <Check><CheckBox type="checkbox" /><span>Match D<u>i</u>acritics</span></Check>
        <Check><CheckBox type="checkbox" /><span><u>W</u>hole Words</span></Check>
        <Push><IconButton type="button" aria-label="Close find bar"><Ico w={1.5}><path d="M3 3l10 10M13 3L3 13" /></Ico></IconButton></Push>
      </FindBar>
    </Screen>
  );
}
